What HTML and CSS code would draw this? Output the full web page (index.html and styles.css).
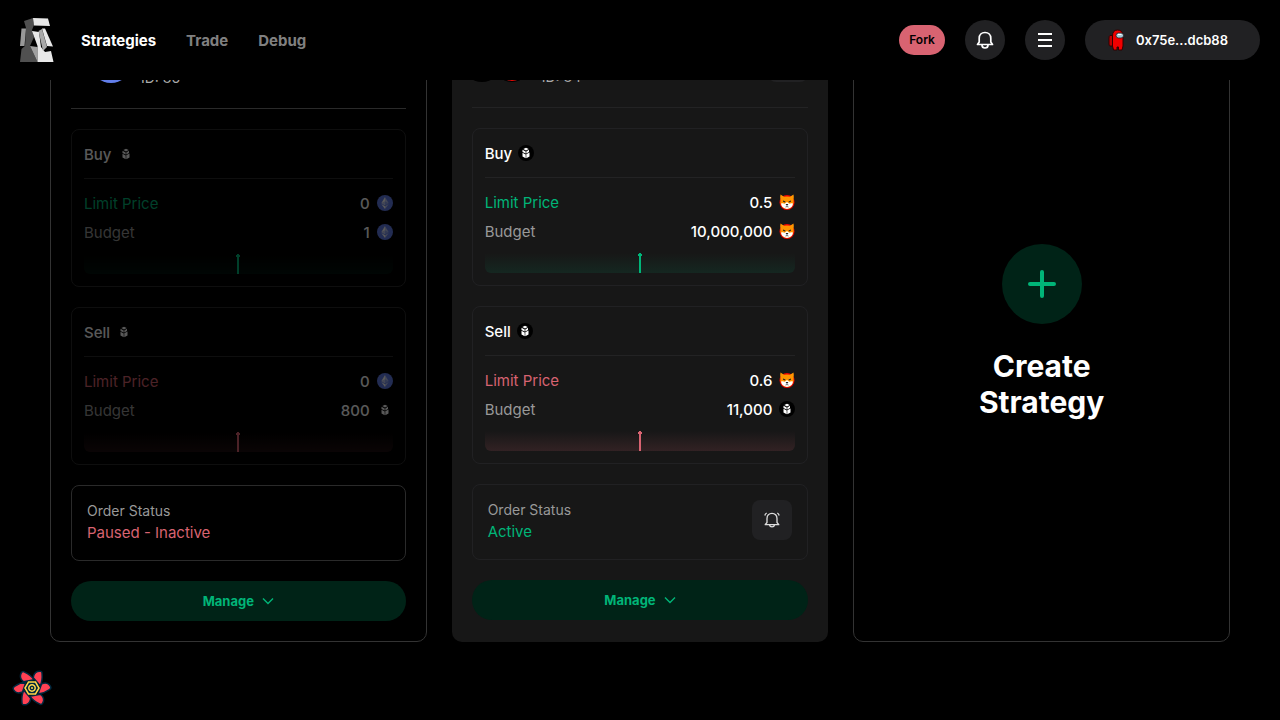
FILE: index.html
```html
<!DOCTYPE html>
<html lang="en">
<head>
<meta charset="utf-8">
<meta name="viewport" content="width=device-width, initial-scale=1">
<title>Strategies</title>
<link rel="stylesheet" href="styles.css">
</head>
<body>
<svg class="sprite" aria-hidden="true">
  <symbol id="eth" viewBox="0 0 16 16"><circle cx="8" cy="8" r="8" fill="#627eea"/><path d="M8 2v4.5l3.7 1.7z" fill="#fff" opacity=".6"/><path d="M8 2 4.3 8.2 8 6.500z" fill="#fff"/><path d="M8 6.500v3.900l3.700-2.200z" fill="#fff" opacity=".3"/><path d="M4.300 8.200 8 10.400V6.500z" fill="#fff" opacity=".6"/><path d="M8 11.200V14l3.700-5z" fill="#fff" opacity=".6"/><path d="M8 14v-2.800L4.300 9z" fill="#fff"/></symbol>
  <symbol id="bnt" viewBox="0 0 16 16"><circle cx="8" cy="8" r="8" fill="#000"/><path d="M8 2.800 10.700 4.100 8 5.500 5.300 4.100zM4.500 4.800 7.700 6.400v2.200L4.500 7zM11 4.800V7L8.300 8.500V6.400zM4.500 7.800l3.200 1.600v3.800L4.500 11.500zM8.300 9.300l3.200-1.700v3.800l-3.200 1.800z" fill="#fff"/></symbol>
  <symbol id="shib" viewBox="0 0 16 16"><circle cx="8" cy="8.500" r="7.500" fill="#f00500"/><path d="M1.500.5 5 2.800q3-.8 6 0L14.500.5q.7 3 0 5.500.7 3-1 5.500Q11.500 15 8 15t-5.500-3.500Q.8 9 1.500 6 .8 3.500 1.500.5z" fill="#ff9500"/><path d="M2 9.500q2-.8 3.700.3L8 8l2.300 1.800q1.700-1.100 3.700-.3-.5 4.500-6 5.500-5.500-1-6-5.500z" fill="#fff"/><path d="m4 6.500 2.500 1-.5.900-1.900-.7zm8 0-2.500 1 .5.900 1.900-.7zM6.600 10h2.800L8.500 11.500h-1z" fill="#222"/><path d="M6.500 13q1.500-1 3 0" stroke="#333" stroke-width=".7" fill="none"/></symbol>
  <symbol id="chev" viewBox="0 0 12 8"><path d="m1 1.500 5 5 5-5" fill="none" stroke="currentColor" stroke-width="1.400"/></symbol>
</svg>

<header class="topbar">
  <a class="logo" href="#" aria-label="Home">
    <svg width="34" height="44" viewBox="0 0 34 44"><path d="M4 3 13 0l1 7-2 5 2 7-4 9 7.500 16H0l1.500-13L5 28 6 10z" fill="#505050"/><path d="m13 0 15 .5 2 7.500-16-.5z" fill="#e8e8e8"/><path d="M1.500 10.500H6L4.500 28H0z" fill="#999"/><path d="m10 28 7.500 1v15z" fill="#a0a0a0"/><path d="m12 13 7 1 2 15 4 5 6-1 2.500 11h-16V28z" fill="#e8e8e8"/><path d="m18.500 13 3.500-2 5 18-4 4z" fill="#a8a8a8"/><path d="M22 10.500h3l8 18-6-.5z" fill="#e8e8e8"/></svg>
  </a>
  <nav class="nav">
    <a class="nav-link current" href="#">Strategies</a>
    <a class="nav-link" href="#">Trade</a>
    <a class="nav-link" href="#">Debug</a>
  </nav>
  <div class="actions">
    <button class="fork">Fork</button>
    <button class="round" aria-label="Notifications"><svg width="18" height="18" viewBox="0 0 18 18" fill="none" stroke="#fff" stroke-width="1.700"><path d="M1.500 13.500h15L14.800 11V7.200C14.800 4 12.500 1.500 9 1.500S3.200 4 3.200 7.200V11z" stroke-linejoin="round"/><path d="M6 14c0 4 6 4 6 0"/></svg></button>
    <button class="round" aria-label="Menu"><svg width="14" height="14" viewBox="0 0 14 14" stroke="#fff" stroke-width="2"><path d="M0 1h14M0 7h14M0 13h14"/></svg></button>
    <button class="wallet"><svg width="18" height="22" viewBox="0 0 18 22"><path d="M4.500 6.500H2Q1 7 1 9v6q0 2 1 2h2.500z" fill="#c00000" stroke="#300"/><path d="M4.500 7Q4.500 1 9.500 1T15 6.500V17l-1 4h-3.500v-3H9v3H5.500l-1-4z" fill="#f00000" stroke="#300"/><rect x="8" y="4" width="7.500" height="5" rx="2.500" fill="#a5c8d5" stroke="#222" stroke-width=".8"/><path d="M10 5.500h3.500" stroke="#fff"/></svg><span>0x75e...dcb88</span></button>
  </div>
</header>

<main class="strategies">
  <article class="card outlined">
    <div class="card-head">
      <div class="pair"><svg class="coin"><use href="#bnt"/></svg><svg class="coin"><use href="#eth"/></svg></div>
      <span class="pair-id">ID: 86</span>
    </div>
    <hr class="rule">
    <section class="order buy faded">
      <h2 class="order-title">Buy <svg class="token"><use href="#bnt"/></svg></h2>
      <hr class="rule">
      <dl class="facts">
        <dt class="tone">Limit Price</dt><dd>0 <svg class="token"><use href="#eth"/></svg></dd>
        <dt>Budget</dt><dd>1 <svg class="token"><use href="#eth"/></svg></dd>
      </dl>
      <div class="chart"><span class="pin"></span></div>
    </section>
    <section class="order sell faded">
      <h2 class="order-title">Sell <svg class="token"><use href="#bnt"/></svg></h2>
      <hr class="rule">
      <dl class="facts">
        <dt class="tone">Limit Price</dt><dd>0 <svg class="token"><use href="#eth"/></svg></dd>
        <dt>Budget</dt><dd>800 <svg class="token"><use href="#bnt"/></svg></dd>
      </dl>
      <div class="chart"><span class="pin"></span></div>
    </section>
    <section class="status">
      <div><h2 class="status-label">Order Status</h2><p class="sell-text">Paused - Inactive</p></div>
    </section>
    <button class="manage">Manage <svg width="12" height="8"><use href="#chev"/></svg></button>
  </article>

  <article class="card filled">
    <div class="card-head">
      <div class="pair"><svg class="coin"><use href="#bnt"/></svg><svg class="coin ringed"><use href="#shib"/></svg></div>
      <span class="pair-id">ID: 84</span>
      <button class="tile" aria-label="Details"></button>
    </div>
    <hr class="rule">
    <section class="order buy">
      <h2 class="order-title">Buy <svg class="token"><use href="#bnt"/></svg></h2>
      <hr class="rule">
      <dl class="facts">
        <dt class="tone">Limit Price</dt><dd>0.5 <svg class="token"><use href="#shib"/></svg></dd>
        <dt>Budget</dt><dd>10,000,000 <svg class="token"><use href="#shib"/></svg></dd>
      </dl>
      <div class="chart"><span class="pin"></span></div>
    </section>
    <section class="order sell">
      <h2 class="order-title">Sell <svg class="token"><use href="#bnt"/></svg></h2>
      <hr class="rule">
      <dl class="facts">
        <dt class="tone">Limit Price</dt><dd>0.6 <svg class="token"><use href="#shib"/></svg></dd>
        <dt>Budget</dt><dd>11,000 <svg class="token"><use href="#bnt"/></svg></dd>
      </dl>
      <div class="chart"><span class="pin"></span></div>
    </section>
    <section class="status">
      <div><h2 class="status-label">Order Status</h2><p class="buy-text">Active</p></div>
      <button class="tile" aria-label="Set alert"><svg width="16" height="16" viewBox="0 0 16 16" fill="none" stroke="#ddd" stroke-width="1.300"><path d="M1.200 12.700h13.600L13 10.500V6.500C13 3.500 11 1.300 8 1.300S3 3.500 3 6.500v4z" stroke-linejoin="round"/><path d="M5.500 13c.5 2.500 4.500 2.500 5 0M.8 3.500Q1.200 1.800 2.700 1M15.200 3.500Q14.800 1.800 13.300 1"/></svg></button>
    </section>
    <button class="manage">Manage <svg width="12" height="8"><use href="#chev"/></svg></button>
  </article>

  <a class="card outlined create" href="#">
    <span class="plus"><svg width="28" height="28" viewBox="0 0 28 28"><path d="M14 2v24M2 14h24" stroke="currentColor" stroke-width="4" stroke-linecap="round"/></svg></span>
    <span class="create-text">Create Strategy</span>
  </a>
</main>

<button class="devtools" aria-label="Open query devtools">
  <svg width="40" height="38" viewBox="-20 -19 40 38">
    <g fill="#ff4154" stroke="#00293f" stroke-width="1.500">
      <path id="petal" d="M9.500-4Q14-6 17-3.500 20.500 0 17.500 1.500 12 5.500 6 6z"/>
      <use href="#petal" transform="rotate(60)"/><use href="#petal" transform="rotate(120)"/><use href="#petal" transform="rotate(180)"/><use href="#petal" transform="rotate(240)"/><use href="#petal" transform="rotate(300)"/>
    </g>
    <path d="M-3.500-6h7L7 0 3.500 6h-7L-7 0z" fill="#00293f" stroke="#ffd94c" stroke-width="1.500"/><circle r="3.200" fill="#00293f" stroke="#ffd94c" stroke-width="1.500"/><circle r="1" fill="#ffd94c"/>
  </svg>
</button>
</body>
</html>
```
FILE: styles.css
```css
* { box-sizing: border-box; }
body { margin: 0; min-height: 100vh; background: #000; color: #fff; font: 15px/24px Inter, "Liberation Sans", sans-serif; overflow-x: hidden; }
h2, p, dl, dd { margin: 0; font-weight: 400; }
a { color: inherit; text-decoration: none; }
button { border: 0; padding: 0; color: inherit; font: inherit; cursor: pointer; display: flex; align-items: center; justify-content: center; }
svg { display: block; flex: none; }
.sprite { position: absolute; width: 0; height: 0; }

.topbar { position: sticky; top: 0; z-index: 2; height: 80px; padding: 0 20px; display: flex; align-items: center; background: #000; }
.nav { display: flex; gap: 30px; margin-left: 27px; padding-top: 2px; font-weight: 700; }
.nav-link { color: #808080; }
.nav-link.current { color: #fff; }
.actions { display: flex; align-items: center; gap: 20px; margin-left: auto; }
.fork { height: 30px; padding: 0 10px; border-radius: 15px; background: #d86371; color: #000; font-size: 12px; font-weight: 600; }
.round { width: 40px; height: 40px; border-radius: 50%; background: #212123; }
.wallet { height: 40px; padding: 0 32px 0 23px; gap: 10px; border-radius: 20px; background: #212123; font-size: 13px; font-weight: 600; }

.strategies { display: grid; grid-template-columns: repeat(3, minmax(0, 1fr)); gap: 25px; margin-top: -58px; padding: 0 50px 78px; }
.card { display: flex; flex-direction: column; gap: 20px; padding: 20px; border-radius: 10px; }
.outlined { border: 1px solid #333; }
.filled { background: #171717; }
.card-head { display: flex; align-items: flex-start; gap: 10px; padding-bottom: 5px; }
.card-head .tile { margin-left: auto; }
.pair { display: flex; }
.coin { width: 40px; height: 40px; margin-left: -10px; }
.ringed { border: 1px solid #000; border-radius: 50%; }
.pair-id { align-self: flex-end; color: #aaa; font-size: 14px; line-height: 20px; margin-bottom: -5px; }
.rule { width: 100%; height: 1px; margin: 0; border: 0; background: #2a2a2a; }
.filled .rule { background: #232324; }

.order { border: 1px solid #2a2a2a; border-radius: 8px; padding: 12px; }
.filled .order, .filled .status { border-color: #212123; }
.faded { opacity: 0.35; }
.order-title { display: flex; align-items: center; gap: 6px; font-size: 15px; line-height: 26px; font-weight: 500; margin-bottom: 10px; }
.token { width: 16px; height: 16px; }
.facts { display: grid; grid-template-columns: 1fr auto; row-gap: 3px; margin: 12px 0 8px; line-height: 26px; }
.facts dt { color: #999; }
.facts dd { display: flex; align-items: center; justify-content: flex-end; gap: 7px; font-weight: 500; }
.facts .token, .order-title .token { margin-bottom: 2px; }
.facts .tone { color: var(--tone); }
.buy { --tone: #00b578; --wash: rgba(0, 181, 120, 0.1); }
.sell { --tone: #d86371; --wash: rgba(216, 99, 113, 0.14); }
.chart { display: flex; justify-content: center; height: 20px; border-radius: 0 0 6px 6px; background: linear-gradient(transparent, var(--wash)); }
.pin { width: 4px; background: radial-gradient(circle at 2px 2px, var(--tone) 2px, transparent 2px), linear-gradient(var(--tone), var(--tone)) 1px 2px / 2px 100% no-repeat; }

.status { display: flex; align-items: flex-start; justify-content: space-between; padding: 15px; border: 1px solid #2a2a2a; border-radius: 8px; }
.status-label { color: #999; font-size: 14px; line-height: 20px; }
.buy-text { color: #00b578; }
.sell-text { color: #d86371; }
.tile { width: 40px; height: 40px; border-radius: 8px; background: #212123; }
.manage { height: 40px; gap: 8px; border-radius: 20px; background: #002317; color: #00b578; font-size: 13px; font-weight: 700; }

.create { align-items: center; justify-content: center; gap: 24px; }
.plus { display: grid; place-items: center; width: 80px; height: 80px; border-radius: 50%; background: #002317; color: #00b578; }
.create-text { max-width: 160px; text-align: center; font-size: 30px; line-height: 36px; font-weight: 700; }
.devtools { position: fixed; left: 12px; bottom: 13px; background: none; }
```
